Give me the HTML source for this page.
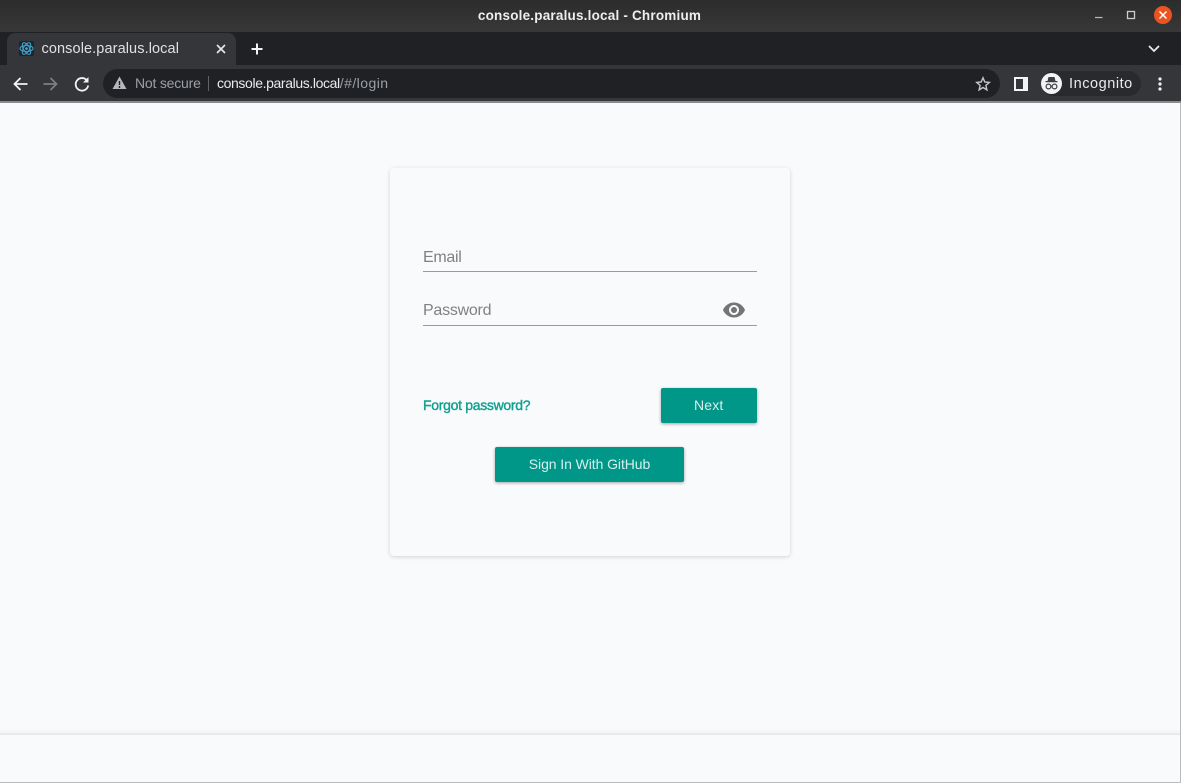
<!DOCTYPE html>
<html><head><meta charset="utf-8"><style>
html,body{margin:0;padding:0;background:#fff;overflow:hidden;}
#w{position:absolute;left:0;top:0;width:1181px;height:783px;overflow:hidden;background:#f9fafc;font-family:"Liberation Sans",sans-serif;}
.a{position:absolute;white-space:nowrap;}
svg{position:absolute;overflow:visible;}
.btn{background:#009688;border-radius:2px;color:#d5efec;font-size:14px;text-align:center;box-shadow:0 1px 3px rgba(0,0,0,.35);}
</style></head><body><div id="w">
<div class="a" style="left:0;top:0;width:1181px;height:32px;background:linear-gradient(#2c2c2c,#383838);"></div>
<div class="a" style="left:0;top:0;width:1179px;height:32px;line-height:31px;text-align:center;color:#eee;font-weight:bold;font-size:13.5px;letter-spacing:.2px;">console.paralus.local - Chromium</div>
<svg style="left:1090px;top:8px" width="85" height="16" viewBox="0 0 85 16">
<path d="M5 9.500H12.500" stroke="#bbb" stroke-width="1.200" fill="none"/>
<rect x="37.500" y="3.500" width="7" height="7" fill="none" stroke="#ccc" stroke-width="1.300"/>
<circle cx="73" cy="7" r="9" fill="#e95420"/>
<path d="M69.500 3.500L76.500 10.500M76.500 3.500L69.500 10.500" stroke="#fff" stroke-width="1.500"/>
</svg>
<div class="a" style="left:0;top:32px;width:1181px;height:33px;background:#202124;"></div>
<div class="a" style="left:7px;top:33px;width:229px;height:32px;background:#35363a;border-radius:8px 8px 0 0;"></div>
<div class="a" style="left:19px;top:41px;width:15px;height:15px;background:#1c2530;border-radius:2px;"></div>
<svg style="left:19px;top:41px" width="15" height="15" viewBox="0 0 15 15" fill="none" stroke="#3f9fc6" stroke-width="1.100">
<ellipse cx="7.500" cy="7.500" rx="6.500" ry="3"/>
<ellipse cx="7.500" cy="7.500" rx="6.500" ry="3" transform="rotate(60 7.500 7.500)"/>
<ellipse cx="7.500" cy="7.500" rx="6.500" ry="3" transform="rotate(120 7.500 7.500)"/>
<circle cx="7.500" cy="7.500" r="1.300" fill="#4fb3d9" stroke="none"/>
</svg>
<div class="a" style="left:41.500px;top:40px;color:#dfe1e5;font-size:14.500px;line-height:18px;letter-spacing:.1px;">console.paralus.local</div>
<svg style="left:215px;top:43px" width="12" height="12" viewBox="0 0 12 12"><path d="M2 2L10 10M10 2L2 10" stroke="#e4e6ea" stroke-width="1.700"/></svg>
<svg style="left:250px;top:42px" width="14" height="14" viewBox="0 0 14 14"><path d="M7 1.500V12.500M1.500 7H12.500" stroke="#f1f3f4" stroke-width="2"/></svg>
<svg style="left:1147px;top:44px" width="14" height="10" viewBox="0 0 14 10"><path d="M2 2L7 7L12 2" stroke="#e8eaed" stroke-width="1.800" fill="none"/></svg>
<div class="a" style="left:0;top:65px;width:1181px;height:36px;background:#35363a;"></div>
<div class="a" style="left:0;top:101px;width:1181px;height:2px;background:#8a8b8d;"></div>
<svg style="left:12px;top:74.500px" width="18" height="18" viewBox="0 0 18 18"><path d="M15.500 9H3M8.500 3L2.500 9L8.500 15" stroke="#f1f3f4" stroke-width="1.800" fill="none"/></svg>
<svg style="left:41px;top:74.500px" width="18" height="18" viewBox="0 0 18 18"><path d="M2.500 9H15M9.500 3L15.500 9L9.500 15" stroke="#7d7f83" stroke-width="1.800" fill="none"/></svg>
<svg style="left:72.500px;top:74.500px" width="18" height="18" viewBox="0 0 18 18"><path d="M14 5.500A6.300 6.300 0 1 0 15.200 10.500" stroke="#f1f3f4" stroke-width="1.800" fill="none"/><path d="M15.500 2V7.500H10Z" fill="#f1f3f4"/></svg>
<div class="a" style="left:103px;top:69px;width:897px;height:29px;background:#202124;border-radius:15px;"></div>
<svg style="left:112px;top:76px" width="15" height="14" viewBox="0 0 15 14"><path d="M7.500 .5L14.500 13H.5Z" fill="#b4b7bb"/><path d="M7.500 5V9M7.500 10V12" stroke="#202124" stroke-width="1.400"/></svg>
<div class="a" style="left:135px;top:74px;color:#9aa0a6;font-size:14px;line-height:18px;letter-spacing:-.2px;">Not secure</div>
<div class="a" style="left:208px;top:76px;width:1px;height:15px;background:#5f6368;"></div>
<div class="a" style="left:217px;top:74px;color:#e8eaed;font-size:14px;line-height:18px;letter-spacing:-.38px;">console.paralus.local<span style="color:#9aa0a6;letter-spacing:.45px">/#/login</span></div>
<svg style="left:975px;top:76px" width="16" height="16" viewBox="0 0 16 16"><path d="M8 1.800L9.800 6L14.300 6.400L10.900 9.400L11.900 13.900L8 11.500L4.100 13.900L5.100 9.400L1.700 6.400L6.200 6Z" fill="none" stroke="#c4c7ca" stroke-width="1.400"/></svg>
<svg style="left:1014px;top:77px" width="14" height="14" viewBox="0 0 14 14"><rect x="0" y="0" width="14" height="14" fill="#f1f3f4"/><rect x="2" y="2" width="7" height="10" fill="#35363a"/></svg>
<div class="a" style="left:1041px;top:71px;width:100px;height:25px;background:#292a2d;border-radius:13px;"></div>
<div class="a" style="left:1041px;top:73px;width:21px;height:21px;background:#f1f3f4;border-radius:50%;"></div>
<svg style="left:1041px;top:73px" width="21" height="21" viewBox="0 0 21 21"><path d="M7.500 4H13.500L14.500 8H16.500V9.200H4.500V8H6.500Z" fill="#3c4043"/><circle cx="7.500" cy="13.500" r="2.400" fill="none" stroke="#3c4043" stroke-width="1.200"/><circle cx="13.500" cy="13.500" r="2.400" fill="none" stroke="#3c4043" stroke-width="1.200"/><path d="M9.800 13H11.200" stroke="#3c4043"/></svg>
<div class="a" style="left:1069px;top:75px;color:#e8eaed;font-size:14.500px;line-height:18px;letter-spacing:.55px;">Incognito</div>
<svg style="left:1156px;top:76px" width="8" height="16" viewBox="0 0 8 16"><circle cx="4" cy="3" r="1.600" fill="#f1f3f4"/><circle cx="4" cy="8" r="1.600" fill="#f1f3f4"/><circle cx="4" cy="13" r="1.600" fill="#f1f3f4"/></svg>

<div class="a" style="left:390px;top:168px;width:400px;height:388px;background:#f9fafc;border-radius:4px;box-shadow:0 1px 4px rgba(0,0,0,.16);"></div>
<div class="a" style="left:423px;top:247.500px;color:#808184;font-size:16px;line-height:19px;letter-spacing:-.3px;">Email</div>
<div class="a" style="left:423px;top:271px;width:334px;height:1px;background:#9a9b9d;"></div>
<div class="a" style="left:423px;top:301px;color:#808184;font-size:16px;line-height:19px;letter-spacing:-.25px;">Password</div>
<div class="a" style="left:423px;top:325px;width:334px;height:1px;background:#9a9b9d;"></div>
<svg style="left:722px;top:298px" width="24" height="24" viewBox="0 0 24 24"><path fill="#757575" d="M12 4.500C7 4.500 2.730 7.610 1 12c1.730 4.390 6 7.500 11 7.500s9.270-3.110 11-7.500c-1.730-4.390-6-7.500-11-7.500zM12 17c-2.760 0-5-2.240-5-5s2.240-5 5-5 5 2.240 5 5-2.240 5-5 5zm0-8c-1.660 0-3 1.340-3 3s1.340 3 3 3 3-1.340 3-3-1.340-3-3-3z"/></svg>
<div class="a" style="left:423px;top:396px;color:#12a090;font-size:14px;line-height:18px;-webkit-text-stroke:.4px #12a090;letter-spacing:-.3px;">Forgot password?</div>
<div class="a btn" style="left:660.500px;top:388px;width:96.500px;height:35px;line-height:34px;letter-spacing:.15px;">Next</div>
<div class="a btn" style="left:495px;top:447px;width:189px;height:35px;line-height:34px;letter-spacing:-.08px;">Sign In With GitHub</div>
<div class="a" style="left:0;top:733px;width:1181px;height:2px;background:#e9eaed;"></div>
<div class="a" style="left:0;top:730px;width:1181px;height:3px;background:#f5f6f8;"></div>
<div class="a" style="left:0;top:782px;width:1181px;height:1px;background:#bbb;"></div>
<div class="a" style="left:1180px;top:103px;width:1px;height:680px;background:#bbb;"></div>
</div></body></html>
